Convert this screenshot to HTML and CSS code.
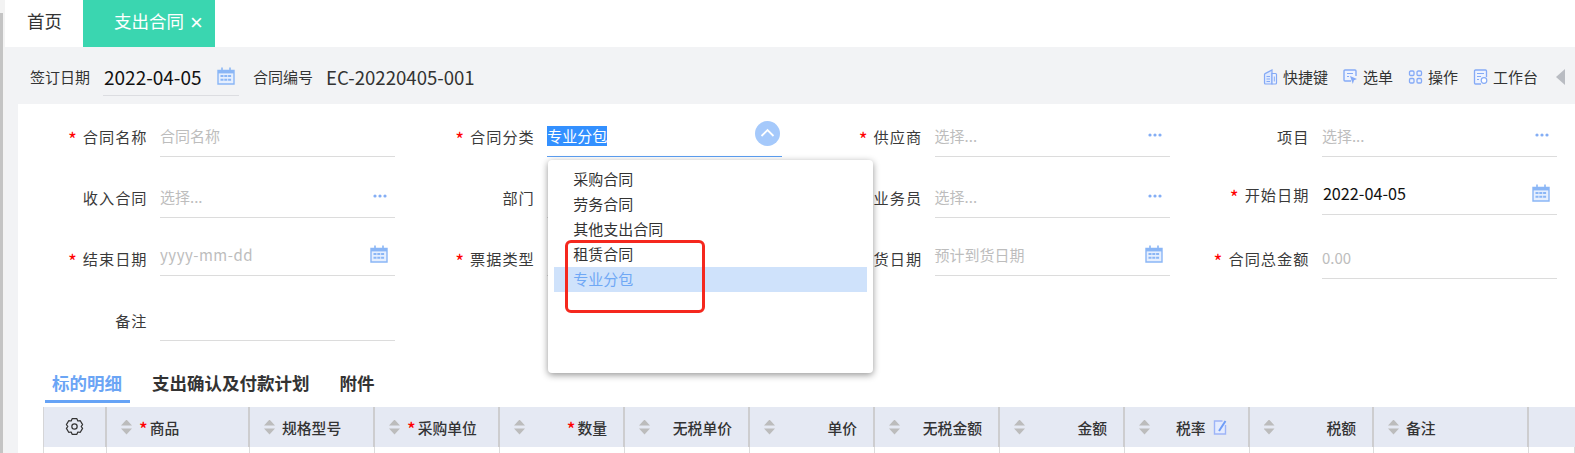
FILE: index.html
```html
<!DOCTYPE html>
<html lang="zh-CN">
<head>
<meta charset="utf-8">
<title>支出合同</title>
<link rel="stylesheet" href="styles.css">
</head>
<body>
<svg class="sprites" aria-hidden="true">
  <symbol id="cal" viewBox="0 0 18 18">
    <path d="M1 3.500h16v13.500H1z" fill="#e6effe" stroke="#8ab6f6" stroke-width="1.400"/>
    <path d="M1 3h16v3.400H1z" fill="#8ab6f6"/>
    <path d="M5 .5v4M13 .5v4" stroke="#8ab6f6" stroke-width="1.600"/>
    <path d="M3.500 9h11M3.500 12.800h11" stroke="#8ab6f6" stroke-width="2" stroke-dasharray="3 .8"/>
  </symbol>
  <symbol id="dots" viewBox="0 0 14 4">
    <circle cx="2" cy="2" r="1.600" fill="#84aef5"/><circle cx="7" cy="2" r="1.600" fill="#84aef5"/><circle cx="12" cy="2" r="1.600" fill="#84aef5"/>
  </symbol>
</svg>
<div class="app">
  <div class="rail"><div class="rail-bar"></div></div>
  <div class="page">
    <nav class="tabs">
      <span class="tab">首页</span>
      <span class="tab tab-on">支出合同<span class="tab-x">×</span></span>
    </nav>
    <header class="toolbar">
      <span class="tb-label">签订日期</span>
      <span class="tb-date">2022-04-05<svg class="ico-cal"><use href="#cal"/></svg></span>
      <span class="tb-label tb-no">合同编号</span>
      <span class="tb-value">EC-20220405-001</span>
      <div class="tools">
        <span class="tool"><svg class="tool-ico" viewBox="0 0 15 16"><path d="M1.500 5.500a1 1 0 0 1 .6-.9L9 1v14H2.500a1 1 0 0 1-1-1z" fill="#dfe9fe" stroke="#85aaf6" stroke-width="1.200"/><path d="M9 4.500h3.500a1 1 0 0 1 1 1V14a1 1 0 0 1-1 1H9z" fill="#eef3fe" stroke="#85aaf6" stroke-width="1.200"/><path d="M3.500 7.500h3.500M3.500 10h3.500M3.500 12.500h3.500M11.300 7.500v5" stroke="#85aaf6"/></svg>快捷键</span>
        <span class="tool"><svg class="tool-ico" viewBox="0 0 15 16"><path d="M8 12H2a1 1 0 0 1-1-1V2a1 1 0 0 1 1-1h10a1 1 0 0 1 1 1v5" fill="#eef3fe" stroke="#85aaf6" stroke-width="1.400"/><path d="M4 4.500h6M4 7.500h2" stroke="#85aaf6" stroke-width="1.200"/><path d="M7 7l7 3-3 1.200L9.800 15z" fill="#85aaf6"/></svg>选单</span>
        <span class="tool"><svg class="tool-ico" viewBox="0 0 15 16"><g fill="#eef3fe" stroke="#85aaf6" stroke-width="1.300"><rect x="1.500" y="2" width="4.500" height="4.500" rx="1.200"/><rect x="9" y="2" width="4.500" height="4.500" rx="1.200"/><rect x="1.500" y="9.500" width="4.500" height="4.500" rx="1.200"/><rect x="9" y="9.500" width="4.500" height="4.500" rx="1.200"/></g></svg>操作</span>
        <span class="tool"><svg class="tool-ico" viewBox="0 0 15 16"><path d="M13.500 8V2a1 1 0 0 0-1-1h-10a1 1 0 0 0-1 1v12a1 1 0 0 0 1 1H8" fill="#eef3fe" stroke="#85aaf6" stroke-width="1.300"/><path d="M4 4.500h7M4 7.500h4M4 10.500h2" stroke="#85aaf6" stroke-width="1.200"/><circle cx="11" cy="11.500" r="2.800" fill="#fff" stroke="#85aaf6" stroke-width="1.200"/></svg>工作台</span>
        <span class="collapse"></span>
      </div>
    </header>
    <main class="content">
      <form class="form">
        <div class="field"><label class="label"><i class="star">*</i>合同名称</label><div class="input ph">合同名称</div></div>
        <div class="field"><label class="label"><i class="star">*</i>合同分类</label>
          <div class="input input-open"><span class="selected">专业分包</span>
            <span class="chev"><svg viewBox="0 0 25 25"><path d="M6.500 15l6-6 6 6" fill="none" stroke="#fff" stroke-width="1.800"/></svg></span>
            <div class="dropdown">
              <div class="opt">采购合同</div>
              <div class="opt">劳务合同</div>
              <div class="opt">其他支出合同</div>
              <div class="opt">租赁合同</div>
              <div class="opt opt-on">专业分包</div>
              <div class="mark"></div>
            </div>
          </div>
        </div>
        <div class="field"><label class="label"><i class="star">*</i>供应商</label><div class="input ph">选择...<svg class="ico-dots"><use href="#dots"/></svg></div></div>
        <div class="field"><label class="label">项目</label><div class="input ph">选择...<svg class="ico-dots"><use href="#dots"/></svg></div></div>

        <div class="field"><label class="label">收入合同</label><div class="input ph">选择...<svg class="ico-dots"><use href="#dots"/></svg></div></div>
        <div class="field"><label class="label">部门</label><div class="input ph"></div></div>
        <div class="field"><label class="label">业务员</label><div class="input ph">选择...<svg class="ico-dots"><use href="#dots"/></svg></div></div>
        <div class="field field-up"><label class="label"><i class="star">*</i>开始日期</label><div class="input val">2022-04-05<svg class="ico-cal ico-end"><use href="#cal"/></svg></div></div>

        <div class="field field-low"><label class="label"><i class="star">*</i>结束日期</label><div class="input ph ph-latin">yyyy-mm-dd<svg class="ico-cal ico-end"><use href="#cal"/></svg></div></div>
        <div class="field field-low"><label class="label"><i class="star">*</i>票据类型</label><div class="input ph"></div></div>
        <div class="field field-low"><label class="label">到货日期</label><div class="input ph">预计到货日期<svg class="ico-cal ico-end"><use href="#cal"/></svg></div></div>
        <div class="field field-low field-down"><label class="label"><i class="star">*</i>合同总金额</label><div class="input ph">0.00</div></div>

        <div class="field"><label class="label">备注</label><div class="input"></div></div>
      </form>

      <div class="subtabs">
        <span class="subtab subtab-on">标的明细</span>
        <span class="subtab">支出确认及付款计划</span>
        <span class="subtab">附件</span>
      </div>

      <div class="table">
        <div class="th th-gear"><svg class="gear" viewBox="0 0 20 20"><path d="M7.500 1.800h5l1 2.400 2.600-.3 2.400 4.100L17 10l1.500 2-2.400 4.100-2.600-.3-1 2.400h-5l-1-2.400-2.600.3L1.500 12 3 10 1.500 8l2.400-4.100 2.600.3z" fill="none" stroke="#333" stroke-width="1.300" stroke-linejoin="round"/><circle cx="10" cy="10" r="2.800" fill="none" stroke="#333" stroke-width="1.300"/></svg></div>
        <div class="th"><span class="sort"></span><span class="th-text"><i class="th-star">*</i>商品</span></div>
        <div class="th"><span class="sort"></span><span class="th-text">规格型号</span></div>
        <div class="th"><span class="sort"></span><span class="th-text"><i class="th-star">*</i>采购单位</span></div>
        <div class="th"><span class="sort"></span><span class="th-text th-r"><i class="th-star">*</i>数量</span></div>
        <div class="th"><span class="sort"></span><span class="th-text th-r">无税单价</span></div>
        <div class="th"><span class="sort"></span><span class="th-text th-r">单价</span></div>
        <div class="th"><span class="sort"></span><span class="th-text th-r">无税金额</span></div>
        <div class="th"><span class="sort"></span><span class="th-text th-r">金额</span></div>
        <div class="th"><span class="sort"></span><span class="th-text th-r">税率<svg class="edit" viewBox="0 0 14 15"><path d="M12.500 5v9h-11V1h8" fill="#e4ebfe" stroke="#9db4f8" stroke-width="1.400"/><path d="M12.500 1L6 11" stroke="#6f9df6" stroke-width="2"/></svg></span></div>
        <div class="th"><span class="sort"></span><span class="th-text th-r">税额</span></div>
        <div class="th"><span class="sort"></span><span class="th-text">备注</span></div>
        <div class="th th-last"></div>

        <div class="td"></div><div class="td"></div><div class="td"></div><div class="td"></div><div class="td"></div><div class="td"></div><div class="td"></div><div class="td"></div><div class="td"></div><div class="td"></div><div class="td"></div><div class="td"></div><div class="td"></div>
      </div>
    </main>
  </div>
</div>
</body>
</html>
```

FILE: styles.css
```css
* { box-sizing: border-box; }
html, body { margin: 0; height: 453px; overflow: hidden; background: #fff; }
body { font-family: "Noto Sans CJK SC", "Microsoft YaHei", "Liberation Sans", sans-serif; color: #333; font-size: 15px; }
.sprites { display: none; }
.app { display: flex; height: 453px; }
.rail { width: 5px; flex: none; background: #f3f3f3; padding-top: 13px; }
.rail-bar { width: 3px; height: 100%; background: #c4c4c4; }
.page { flex: 1; min-width: 0; display: flex; flex-direction: column; }

.tabs { height: 47px; flex: none; display: flex; background: #fff; }
.tab { width: 78px; padding-left: 22px; font-size: 17.500px; line-height: 41px; color: #333; }
.tab-on { width: 132px; padding-left: 31px; background: #3ad6b0; color: #fff; white-space: nowrap; }
.tab-x { margin-left: 6px; font-family: "Liberation Sans", sans-serif; font-size: 22px; line-height: 1; font-weight: 400; position: relative; top: 2px; }

.toolbar { height: 57px; flex: none; display: flex; align-items: center; padding: 2px 0 0 25px; background: #f2f3f5; }
.tb-label { font-size: 15px; width: 73px; }
.tb-no { width: 73px; margin-left: 14px; }
.tb-date { width: 136px; height: 38px; display: flex; align-items: center; justify-content: space-between; padding: 0 4px 0 1px; border-bottom: 1px solid #dcdde1; font-size: 19px; color: #111; }
.tb-value { font-size: 18.600px; color: #333; }
.tools { margin-left: auto; display: flex; align-items: center; }
.tool { display: flex; align-items: center; gap: 5px; margin-right: 15px; font-size: 15px; color: #333; }
.tool-ico { width: 15px; height: 16px; flex: none; }
.collapse { width: 0; height: 0; margin: 0 10px 0 3px; border-style: solid; border-width: 8px 9px 8px 0; border-color: transparent #b9bcc2 transparent transparent; }
.ico-cal { width: 18px; height: 18px; flex: none; }
.ico-end { margin-right: -1px; }
.ico-dots { width: 14px; height: 4px; flex: none; }

.content { flex: 1; min-height: 0; margin-left: 13px; background: #fff; position: relative; box-shadow: -13px 0 0 #f2f3f5; }
.form { display: grid; grid-template-columns: repeat(4, 387.300px); grid-template-rows: 53px 61px 58px 65px; }
.field { display: grid; grid-template-columns: 128px 235px; column-gap: 14px; align-items: end; }
.field-up { position: relative; top: -3px; }
.field-down .input { position: relative; top: 3px; }
.label { height: 40px; padding: 0 0 2px; margin-right: -1.500px; display: flex; align-items: center; justify-content: flex-end; font-size: 15.200px; letter-spacing: 1px; white-space: nowrap; color: #3a3a3a; }
.field-low .label { padding: 4px 0 0; }
.star { color: #f00; font-style: normal; margin-right: 6px; font-size: 19px; line-height: 1; letter-spacing: 0; position: relative; top: 2px; }
.input { position: relative; height: 41px; padding-bottom: 2px; padding-right: 8px; display: flex; align-items: center; justify-content: space-between; border-bottom: 1px solid #dcdcdc; white-space: nowrap; }
.ph { color: #bdbdbd; }
.ph-latin { letter-spacing: .5px; }
.val { color: #111; padding-left: 1px; font-size: 16.200px; }
.input-open { border-bottom-color: #5d9ff2; }
.selected { display: block; height: 20px; line-height: 20px; background: #3390ff; color: #fff; position: relative; top: 1px; }
.chev { width: 25px; height: 25px; margin-right: -6px; border-radius: 50%; background: #a5c9fb; position: relative; top: -2px; }
.chev svg { display: block; width: 25px; height: 25px; }
.dropdown { position: absolute; left: 1px; top: 44px; z-index: 5; width: 325px; height: 213px; padding: 7px 6px; background: #fff; border-radius: 4px; box-shadow: 0 2px 7px rgba(0, 0, 0, .42); }
.opt { height: 25px; line-height: 24px; padding-left: 19px; color: #333; }
.opt-on { background: #cfe2fb; color: #6fa8f5; }
.mark { position: absolute; left: 17px; top: 80px; width: 140px; height: 73px; border: 3px solid #f5281e; border-radius: 6px; }

.subtabs { display: flex; gap: 30px; margin: 22px 0 0 27px; height: 40px; font-size: 17.500px; font-weight: 700; color: #333; }
.subtab { height: 40px; line-height: 40px; position: relative; white-space: nowrap; }
.subtab:first-child { width: 85px; padding-left: 7px; margin-right: -8px; }
.subtab-on { color: #6ba5f5; border-bottom: 3px solid #66a3f6; }

.table { display: grid; margin: 4px 0 0 25px; grid-template-columns: 64px 143px 125px 125px 125px 125px 125px 125px 125px 124.500px 124.500px 155px 1fr; grid-template-rows: 40px 6px; }
.th { display: flex; align-items: center; padding: 0 16px 0 14px; background: #e5e9f3; border-right: 2px solid #cdcdcf; font-size: 14.800px; font-weight: 500; color: #333; white-space: nowrap; }
.th-gear { justify-content: center; padding: 0; border-left: 1px solid #d5d5d7; }
.th-last { border-right: 0; }
.gear { width: 19px; height: 19px; position: relative; top: -1px; }
.sort { width: 11px; height: 15px; flex: none; margin-right: 7px; background: #bcbcbc; clip-path: polygon(50% 0, 100% 40%, 0 40%, 50% 0, 0 60%, 100% 60%, 50% 100%, 0 60%); }
.th-text { flex: 1; display: flex; align-items: center; }
.th-r { justify-content: flex-end; }
.th-star { color: #f00; font-style: normal; font-size: 18px; line-height: 1; margin-right: 2px; position: relative; top: 1px; }
.edit { width: 14px; height: 15px; margin: 0 5px 0 7px; }
.td { background: #fff; border-right: 1px solid #dcdcdc; }
.td:nth-last-child(13) { border-left: 1px solid #dcdcdc; }
```
